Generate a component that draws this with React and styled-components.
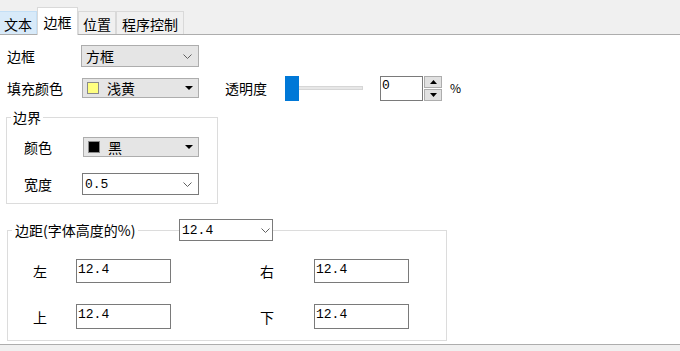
import React from 'react'
import styled, { createGlobalStyle } from 'styled-components'

const Global = createGlobalStyle`
  html, body { margin: 0; padding: 0; background: #fff; }
  * { box-sizing: border-box; }
`

const Page = styled.div`
  width: 680px;
  height: 351px;
  display: flex;
  flex-direction: column;
  background: #fff;
  color: #000;
  font-family: "Noto Sans CJK SC", "Microsoft YaHei", sans-serif;
  font-size: 14px;
  overflow: hidden;
`

const TabBar = styled.div`
  height: 35px;
  flex: none;
  display: flex;
  align-items: flex-end;
  background: #f0f0f0;
  border-bottom: 1px solid #adadad;
`

const Tab = styled.div`
  width: ${p => p.$w}px;
  height: ${p => (p.$active ? 28 : 23)}px;
  margin-bottom: ${p => (p.$active ? -1 : 0)}px;
  display: flex;
  align-items: center;
  justify-content: center;
  line-height: 1;
  border: 1px solid ${p => (p.$active ? '#d9d9d9' : p.$hover ? '#c4dff5' : '#d9d9d9')};
  border-bottom: ${p => (p.$active ? 'none' : '0')};
  border-left-width: ${p => (p.$first ? 0 : 1)}px;
  background: ${p => (p.$active ? '#fff' : p.$hover ? '#d8eaf9' : '#f0f0f0')};
  padding-top: ${p => (p.$active ? 0 : 1)}px;
`

const Content = styled.div`
  flex: 1;
  display: flex;
  flex-direction: column;
  padding-top: 10px;
`

const Row = styled.div`
  display: flex;
  align-items: center;
  height: ${p => p.$h}px;
  margin-top: ${p => p.$mt || 0}px;
  padding-left: ${p => p.$pl || 0}px;
`

const Label = styled.span`
  width: ${p => p.$w}px;
  margin-left: ${p => p.$ml || 0}px;
  flex: none;
  white-space: nowrap;
  line-height: 1;
`

const Combo = styled.div`
  width: ${p => p.$w}px;
  height: ${p => p.$h}px;
  flex: none;
  display: flex;
  align-items: center;
  padding: 0 ${p => p.$pr}px 0 ${p => p.$pl}px;
  background: ${p => (p.$white ? '#fff' : '#e5e5e5')};
  border: 1px solid ${p => (p.$white ? '#7a7a7a' : '#adadad')};
`

const ComboText = styled.span`
  flex: 1;
  line-height: 1;
  font-family: ${p => (p.$mono ? '"Liberation Mono", monospace' : 'inherit')};
  font-size: ${p => (p.$mono ? 13 : 14)}px;
`

const Swatch = styled.span`
  width: 12px;
  height: 12px;
  flex: none;
  margin-right: 8px;
  background: ${p => p.$color};
  border: 1px solid #8a8a8a;
`

const Slider = styled.div`
  width: 78px;
  height: 25px;
  margin-left: 17px;
  flex: none;
  display: flex;
  align-items: center;
`

const Thumb = styled.div`
  width: 14px;
  height: 25px;
  flex: none;
  background: #0078d7;
`

const Track = styled.div`
  flex: 1;
  height: 4px;
  background: #e7e7e7;
  border: 1px solid #d6d6d6;
  border-left: none;
`

const SpinInput = styled.div`
  width: 43px;
  height: 25px;
  margin-left: 17px;
  flex: none;
  border: 1px solid #7a7a7a;
  background: #fff;
  padding: 2px 0 0 1px;
  font-family: "Liberation Mono", monospace;
  font-size: 13px;
  line-height: 1;
`

const Spinner = styled.div`
  width: 18px;
  height: 25px;
  margin-left: 1px;
  flex: none;
  display: grid;
  grid-template-rows: 1fr 1fr;
  gap: 1px;
`

const SpinButton = styled.div`
  background: #e1e1e1;
  border: 1px solid #adadad;
  display: flex;
  align-items: center;
  justify-content: center;
`

const Percent = styled.span`
  margin-left: 8px;
  font-size: 12px;
  line-height: 1;
`

const Group = styled.fieldset`
  width: ${p => p.$w}px;
  margin: ${p => p.$mt}px 0 0 ${p => p.$ml}px;
  padding: 0 0 ${p => p.$pb}px 4px;
  border: 1px solid #dcdcdc;
  min-width: 0;
`

const Legend = styled.legend`
  padding: 0 2px;
  line-height: 16px;
  height: 16px;
`

const WideLegend = styled.legend`
  padding: 0;
  width: 261px;
  height: 22px;
`

const LegendInner = styled.div`
  display: flex;
  align-items: center;
  height: 22px;
  padding-left: 3px;
  white-space: nowrap;
`

const LegendRule = styled.span`
  flex: 1;
  height: 1px;
  margin-left: 3px;
  background: #dcdcdc;
`

const MarginGrid = styled.div`
  display: grid;
  grid-template-columns: 43px 95px 89px 54px 95px;
  grid-template-rows: 24px 25px;
  row-gap: 21px;
  align-items: center;
  margin-top: 18px;
  padding-left: 21px;
`

const Input = styled.div`
  height: 100%;
  border: 1px solid #7a7a7a;
  background: #fff;
  padding: 3px 0 0 1px;
  font-family: "Liberation Mono", monospace;
  font-size: 13px;
  line-height: 1;
`

const BottomBar = styled.div`
  height: 7px;
  flex: none;
  background: #f0f0f0;
  border-top: 1px solid #adadad;
`

const Chevron = () => (
  <svg width="9" height="5" viewBox="0 0 9 5">
    <path d="M0.5 0.5 L4.5 4.5 L8.5 0.5" stroke="#606060" strokeWidth="1" fill="none" />
  </svg>
)

const TriDown = ({ w = 8, h = 4 }) => (
  <svg width={w} height={h} viewBox={`0 0 ${w} ${h}`}>
    <path d={`M0 0H${w}L${w / 2} ${h}Z`} fill="#000" />
  </svg>
)

const TriUp = ({ w = 7, h = 4 }) => (
  <svg width={w} height={h} viewBox={`0 0 ${w} ${h}`}>
    <path d={`M0 ${h}H${w}L${w / 2} 0Z`} fill="#000" />
  </svg>
)

const tabs = [
  { name: '文本', w: 37, hover: true },
  { name: '边框', w: 41, active: true },
  { name: '位置', w: 38 },
  { name: '程序控制', w: 68 },
]

const margins = [
  ['左', '右'],
  ['上', '下'],
]

export default function App() {
  return (
    <Page>
      <Global />
      <TabBar>
        {tabs.map((t, i) => (
          <Tab key={t.name} $w={t.w} $active={t.active} $hover={t.hover} $first={i === 0}>
            {t.name}
          </Tab>
        ))}
      </TabBar>
      <Content>
        <Row $h={22} $pl={7}>
          <Label $w={74}>边框</Label>
          <Combo $w={118} $h={22} $pl={4} $pr={6}>
            <ComboText>方框</ComboText>
            <Chevron />
          </Combo>
        </Row>
        <Row $h={26} $mt={8} $pl={7}>
          <Label $w={75}>填充颜色</Label>
          <Combo $w={117} $h={20} $pl={4} $pr={5}>
            <Swatch $color="#ffff80" />
            <ComboText>浅黄</ComboText>
            <TriDown />
          </Combo>
          <Label $w={43} $ml={26}>透明度</Label>
          <Slider>
            <Thumb />
            <Track />
          </Slider>
          <SpinInput>0</SpinInput>
          <Spinner>
            <SpinButton><TriUp /></SpinButton>
            <SpinButton><TriDown w={7} h={4} /></SpinButton>
          </Spinner>
          <Percent>%</Percent>
        </Row>

        <Group $w={212} $mt={8} $ml={6} $pb={8}>
          <Legend>边界</Legend>
          <Row $h={20} $mt={12} $pl={13}>
            <Label $w={59}>颜色</Label>
            <Combo $w={116} $h={20} $pl={4} $pr={5}>
              <Swatch $color="#000" />
              <ComboText>黑</ComboText>
              <TriDown />
            </Combo>
          </Row>
          <Row $h={22} $mt={16} $pl={13}>
            <Label $w={58}>宽度</Label>
            <Combo $w={117} $h={22} $pl={2} $pr={6} $white>
              <ComboText $mono>0.5</ComboText>
              <Chevron />
            </Combo>
          </Row>
        </Group>

        <Group $w={440} $mt={15} $ml={7} $pb={11}>
          <WideLegend>
            <LegendInner>
              <span>边距(字体高度的%)</span>
              <LegendRule />
              <Combo $w={94} $h={22} $pl={2} $pr={2} $white>
                <ComboText $mono>12.4</ComboText>
                <Chevron />
              </Combo>
            </LegendInner>
          </WideLegend>
          <MarginGrid>
            {margins.map(([a, b]) => (
              <React.Fragment key={a}>
                <Label>{a}</Label>
                <Input>12.4</Input>
                <span />
                <Label>{b}</Label>
                <Input>12.4</Input>
              </React.Fragment>
            ))}
          </MarginGrid>
        </Group>
      </Content>
      <BottomBar />
    </Page>
  )
}
